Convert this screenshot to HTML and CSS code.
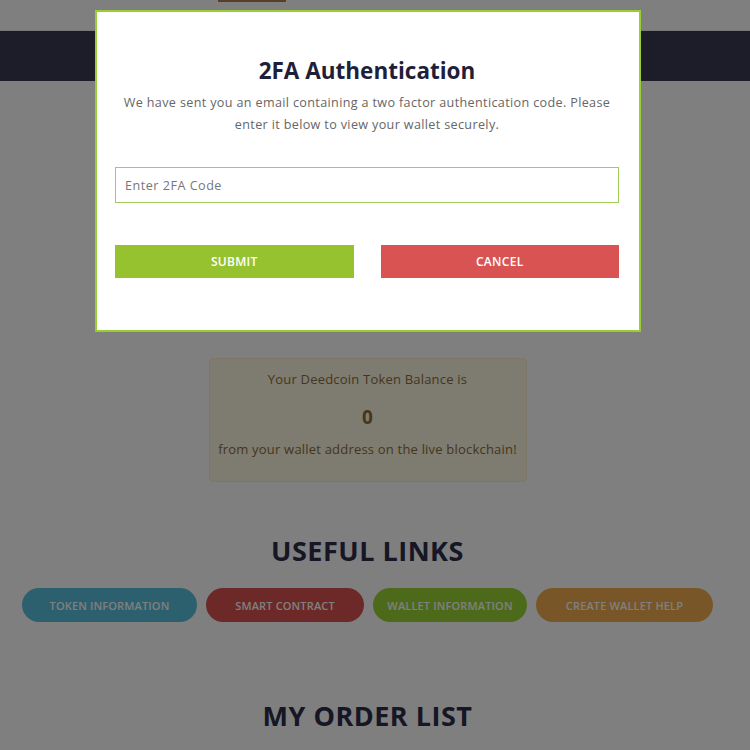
FILE: index.html
```html
<!DOCTYPE html>
<html lang="en">
<head>
<meta charset="utf-8">
<title>2FA Authentication</title>
<link rel="stylesheet" href="styles.css">
</head>
<body>
<div class="page">
  <div class="topbar"><span class="top-btn"></span></div>
  <header class="navbar"></header>
  <main class="main">
    <div class="balance">
      <p class="bal-line">Your Deedcoin Token Balance is</p>
      <p class="bal-num">0</p>
      <p class="bal-line">from your wallet address on the live blockchain!</p>
    </div>
    <h2 class="section-title links-title">USEFUL LINKS</h2>
    <div class="pills">
      <a class="pill pill-info">TOKEN INFORMATION</a>
      <a class="pill pill-danger">SMART CONTRACT</a>
      <a class="pill pill-success">WALLET INFORMATION</a>
      <a class="pill pill-warning">CREATE WALLET HELP</a>
    </div>
    <h2 class="section-title orders-title">MY ORDER LIST</h2>
  </main>
</div>
<div class="overlay"></div>
<div class="modal">
  <h1 class="modal-title">2FA Authentication</h1>
  <p class="modal-text">We have sent you an email containing a two factor authentication code. Please enter it below to view your wallet securely.</p>
  <input class="code-input" type="text" placeholder="Enter 2FA Code">
  <div class="actions">
    <button class="btn btn-submit">SUBMIT</button>
    <button class="btn btn-cancel">CANCEL</button>
  </div>
</div>
</body>
</html>
```
FILE: styles.css
```css
* { box-sizing: border-box; }
html, body { margin: 0; padding: 0; }
body {
  background: #fff;
  font-family: "Open Sans", "Liberation Sans", sans-serif;
  width: 750px;
  height: 750px;
  overflow: hidden;
}
.page { width: 750px; }
.topbar {
  height: 31px;
  border-bottom: 1px solid #f0f0f0;
}
.top-btn {
  display: block;
  margin-left: 218px;
  width: 68px;
  height: 2px;
  background: #b07a50;
}
.navbar {
  height: 50px;
  background: #3a3a54;
}
.main {
  width: 735px;
  display: flex;
  flex-direction: column;
  align-items: center;
  padding-top: 277px;
}
.balance {
  width: 318px;
  height: 124px;
  background: #fcf8e3;
  border: 1px solid #faebcc;
  border-radius: 4px;
  color: #8a6d3b;
  text-align: center;
  padding-top: 11px;
}
.bal-line {
  margin: 0;
  font-size: 13px;
  line-height: 18px;
  letter-spacing: 0.2px;
}
.bal-num {
  margin: 16px 0 10px;
  font-size: 19px;
  font-weight: 700;
  line-height: 26px;
}
.section-title {
  margin: 0;
  color: #2c2c4a;
  font-weight: 700;
  font-size: 27px;
  line-height: 32px;
  letter-spacing: 0.5px;
}
.links-title { margin-top: 53px; }
.pills {
  display: flex;
  gap: 9px;
  margin-top: 21px;
}
.pill {
  display: flex;
  align-items: center;
  justify-content: center;
  height: 34px;
  border-radius: 17px;
  color: #fff;
  font-size: 11px;
  font-weight: 600;
  letter-spacing: 0.15px;
  white-space: nowrap;
}
.pill-info { width: 175px; background: #5bc0de; }
.pill-danger { width: 158px; background: #d9534f; }
.pill-success { width: 154px; background: #98d434; }
.pill-warning { width: 177px; background: #f0ad4e; }
.orders-title { margin-top: 78px; }

.overlay {
  position: fixed;
  inset: 0;
  background: rgba(0, 0, 0, 0.5);
}
.modal {
  position: fixed;
  top: 10px;
  left: 95px;
  width: 546px;
  height: 322px;
  background: #fff;
  border: 2px solid #9acd32;
  padding: 46px 20px 0 18px;
  text-align: center;
}
.modal-title {
  margin: 0;
  font-size: 22.5px;
  line-height: 26px;
  font-weight: 700;
  color: #1f1f3a;
}
.modal-text {
  margin: 8px 0 0;
  padding: 0 6px;
  font-size: 12.6px;
  line-height: 22px;
  letter-spacing: 0.35px;
  color: #666;
}
.code-input {
  display: block;
  width: 504px;
  height: 36px;
  margin-top: 31px;
  border: 1px solid #a3cc5a;
  padding: 0 9px;
  font-family: inherit;
  font-size: 12.6px;
  letter-spacing: 0.5px;
  color: #555;
  outline: none;
  background: #fff;
}
.code-input::placeholder { color: #777; }
.actions {
  display: grid;
  grid-template-columns: 1fr 1fr;
  column-gap: 27px;
  margin-top: 42px;
}
.btn {
  height: 33px;
  border: none;
  color: #fff;
  font-family: inherit;
  font-size: 12px;
  font-weight: 600;
  letter-spacing: 0.3px;
}
.btn-submit { background: #96c22f; }
.btn-cancel { background: #d95353; }
```
